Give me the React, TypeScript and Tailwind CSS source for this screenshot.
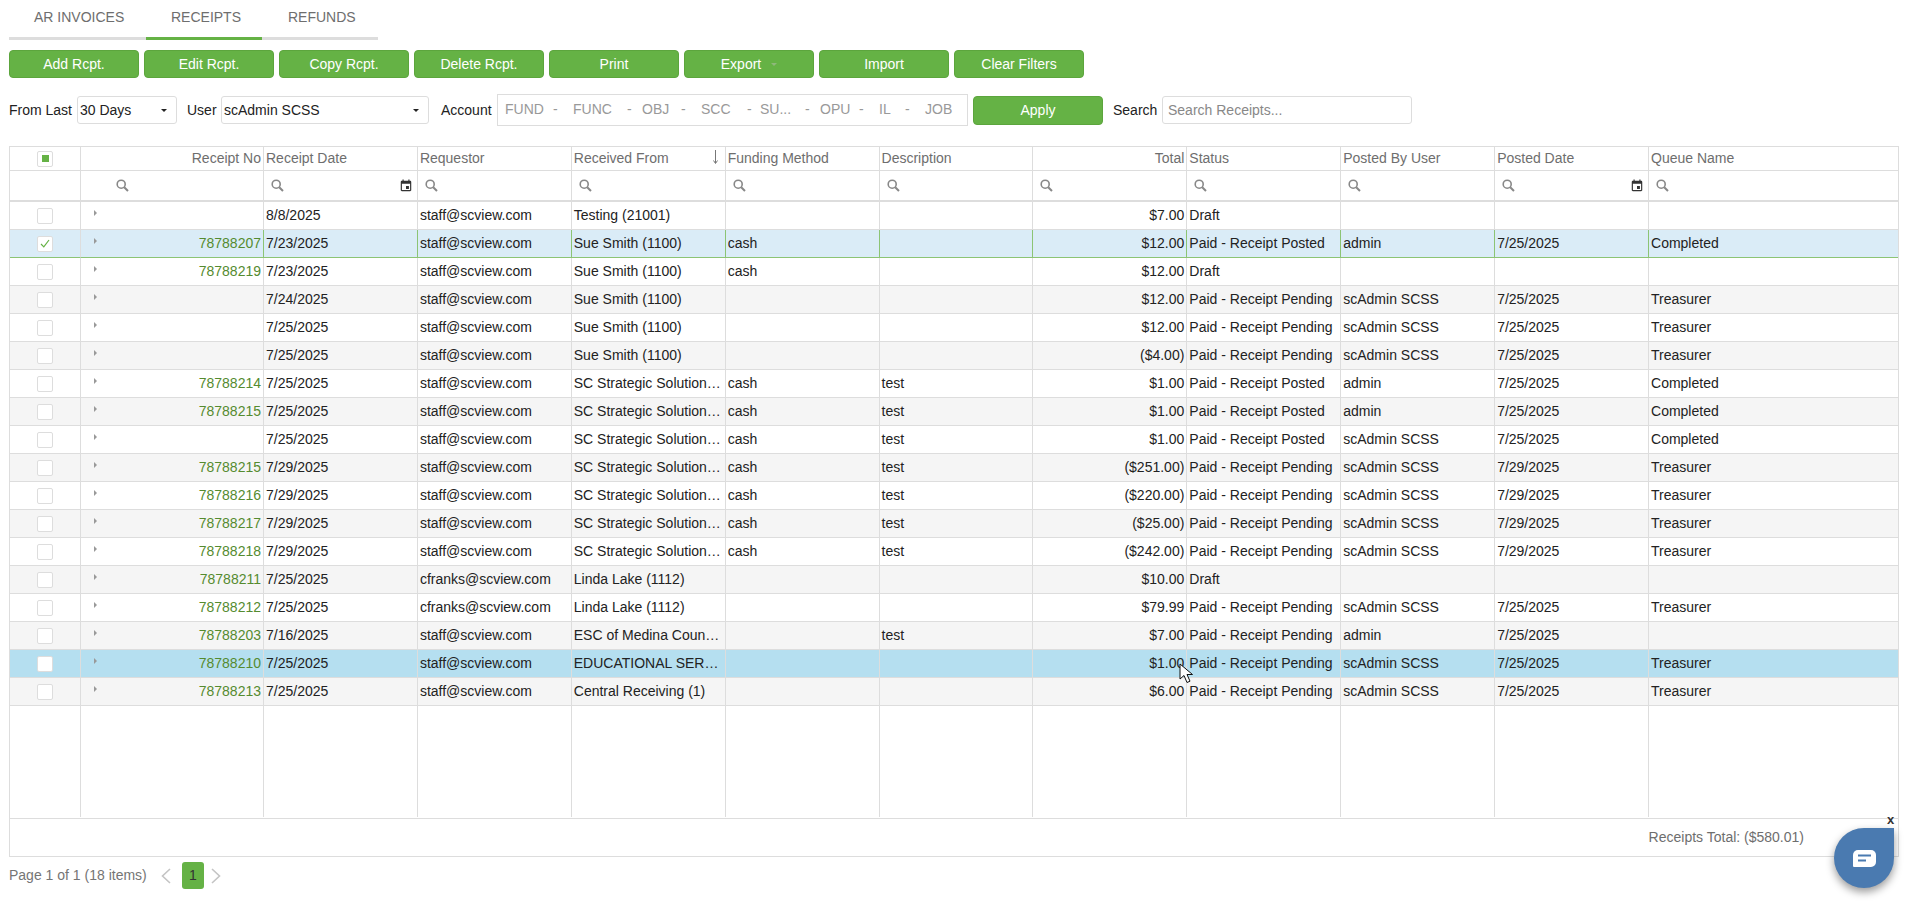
import type { ReactNode } from 'react';

const BTNS = ['Add Rcpt.', 'Edit Rcpt.', 'Copy Rcpt.', 'Delete Rcpt.', 'Print', 'Export', 'Import', 'Clear Filters'];

const S = 'staff@scview.com';
const C = 'cfranks@scview.com';
const SUE = 'Sue Smith (1100)';
const SC = 'SC Strategic Solution…';
const LL = 'Linda Lake (1112)';
const PEND = 'Paid - Receipt Pending';
const POSTED = 'Paid - Receipt Posted';
const SA = 'scAdmin SCSS';

// no, date, requestor, from, method, description, total, status, user, posted, queue
const ROWS: string[][] = [
  ['', '8/8/2025', S, 'Testing (21001)', '', '', '$7.00', 'Draft', '', '', ''],
  ['78788207', '7/23/2025', S, SUE, 'cash', '', '$12.00', POSTED, 'admin', '7/25/2025', 'Completed'],
  ['78788219', '7/23/2025', S, SUE, 'cash', '', '$12.00', 'Draft', '', '', ''],
  ['', '7/24/2025', S, SUE, '', '', '$12.00', PEND, SA, '7/25/2025', 'Treasurer'],
  ['', '7/25/2025', S, SUE, '', '', '$12.00', PEND, SA, '7/25/2025', 'Treasurer'],
  ['', '7/25/2025', S, SUE, '', '', '($4.00)', PEND, SA, '7/25/2025', 'Treasurer'],
  ['78788214', '7/25/2025', S, SC, 'cash', 'test', '$1.00', POSTED, 'admin', '7/25/2025', 'Completed'],
  ['78788215', '7/25/2025', S, SC, 'cash', 'test', '$1.00', POSTED, 'admin', '7/25/2025', 'Completed'],
  ['', '7/25/2025', S, SC, 'cash', 'test', '$1.00', POSTED, SA, '7/25/2025', 'Completed'],
  ['78788215', '7/29/2025', S, SC, 'cash', 'test', '($251.00)', PEND, SA, '7/29/2025', 'Treasurer'],
  ['78788216', '7/29/2025', S, SC, 'cash', 'test', '($220.00)', PEND, SA, '7/29/2025', 'Treasurer'],
  ['78788217', '7/29/2025', S, SC, 'cash', 'test', '($25.00)', PEND, SA, '7/29/2025', 'Treasurer'],
  ['78788218', '7/29/2025', S, SC, 'cash', 'test', '($242.00)', PEND, SA, '7/29/2025', 'Treasurer'],
  ['78788211', '7/25/2025', C, LL, '', '', '$10.00', 'Draft', '', '', ''],
  ['78788212', '7/25/2025', C, LL, '', '', '$79.99', PEND, SA, '7/25/2025', 'Treasurer'],
  ['78788203', '7/16/2025', S, 'ESC of Medina Coun…', '', 'test', '$7.00', PEND, 'admin', '7/25/2025', ''],
  ['78788210', '7/25/2025', S, 'EDUCATIONAL SER…', '', '', '$1.00', PEND, SA, '7/25/2025', 'Treasurer'],
  ['78788213', '7/25/2025', S, 'Central Receiving (1)', '', '', '$6.00', PEND, SA, '7/25/2025', 'Treasurer'],
];

const HEADERS = ['Receipt Date', 'Requestor', 'Received From', 'Funding Method', 'Description', 'Total', 'Status', 'Posted By User', 'Posted Date', 'Queue Name'];

function SearchIcon() {
  return (
    <svg width="13" height="13" viewBox="0 0 13 13" fill="none" stroke="#888" strokeWidth="1.6">
      <circle cx="5.2" cy="5.2" r="4" />
      <path d="M8.2 8.2 12 12" strokeWidth="2" />
    </svg>
  );
}

function CalendarIcon() {
  return (
    <svg width="14" height="14" viewBox="0 0 24 24" fill="#333">
      <path d="M17 12h-5v5h5v-5zM16 1v2H8V1H6v2H5c-1.11 0-1.99.9-1.99 2L3 19c0 1.1.89 2 2 2h14c1.1 0 2-.9 2-2V5c0-1.1-.9-2-2-2h-1V1h-2zm3 18H5V8h14v11z" />
    </svg>
  );
}

function Box({ children }: { children?: ReactNode }) {
  return (
    <span className="mx-auto flex h-[16px] w-[16px] items-center justify-center rounded-[2px] border border-[#ddd] bg-white">
      {children}
    </span>
  );
}

function Caret() {
  return <span className="h-0 w-0 border-x-[3px] border-t-[3px] border-x-transparent border-t-[#222]" />;
}

function Select({ value, className }: { value: string; className: string }) {
  return (
    <div className={'flex h-[28px] items-center justify-between rounded-[3px] border border-[#ddd] bg-white pl-[2px] pr-[9px] ' + className}>
      <span>{value}</span>
      <Caret />
    </div>
  );
}

export default function App() {
  return (
    <div className="relative h-[906px] w-[1910px] overflow-hidden bg-white text-[14px] text-[#222] [font-family:'Liberation_Sans',Arial,sans-serif]">
      <div className="px-[9px]">
        {/* tabs */}
        <div className="flex h-[40px] w-[369px] text-[#6e6e6e]">
          <div className="w-[137px] border-b-[3px] border-[#ddd] pl-[25px] pt-[7px]">AR INVOICES</div>
          <div className="w-[116px] border-b-[3px] border-[#65b245] pl-[25px] pt-[7px]">RECEIPTS</div>
          <div className="w-[116px] border-b-[3px] border-[#ddd] pl-[26px] pt-[7px]">REFUNDS</div>
        </div>

        {/* toolbar */}
        <div className="mt-[10px] flex gap-[5px]">
          {BTNS.map((b) => (
            <button key={b} className="flex h-[28px] w-[130px] items-center justify-center gap-[10px] rounded-[4px] border border-[#5ca53d] bg-[#65b245] text-white">
              {b}
              {b === 'Export' && <span className="h-0 w-0 border-x-[3px] border-t-[3px] border-x-transparent border-t-[#8fb87c]" />}
            </button>
          ))}
        </div>

        {/* filters */}
        <div className="mt-[16px] flex h-[32px] items-center">
          <span className="w-[68px]">From Last</span>
          <Select value="30 Days" className="w-[100px]" />
          <span className="ml-[10px] w-[34px]">User</span>
          <Select value="scAdmin SCSS" className="w-[208px]" />
          <span className="ml-[12px] w-[56px]">Account</span>
          <div className="flex h-[32px] w-[471px] items-center border border-[#ddd] pb-[2px] pl-[7px] text-[#999]">
            <span className="w-[48px]">FUND</span><span className="w-[20px]">-</span>
            <span className="w-[54px]">FUNC</span><span className="w-[15px]">-</span>
            <span className="w-[39px]">OBJ</span><span className="w-[20px]">-</span>
            <span className="w-[46px]">SCC</span><span className="w-[13px]">-</span>
            <span className="w-[45px]">SU...</span><span className="w-[15px]">-</span>
            <span className="w-[39px]">OPU</span><span className="w-[20px]">-</span>
            <span className="w-[26px]">IL</span><span className="w-[20px]">-</span>
            <span>JOB</span>
          </div>
          <button className="ml-[5px] flex h-[29px] w-[130px] items-center justify-center rounded-[4px] border border-[#5ca53d] bg-[#65b245] text-white">Apply</button>
          <span className="ml-[10px] w-[49px]">Search</span>
          <div className="flex h-[28px] w-[250px] items-center rounded-[3px] border border-[#ddd] pl-[5px] text-[#888]">Search Receipts...</div>
        </div>

        {/* grid */}
        <div className="mt-[20px] h-[711px] w-[1890px] border border-[#ddd]">
          <table className="w-[1888px] table-fixed border-separate border-spacing-0">
            <colgroup>
              <col className="w-[71px]" />
              <col className="w-[183px]" />
              <col className="w-[153.9px]" />
              <col className="w-[153.9px]" />
              <col className="w-[153.9px]" />
              <col className="w-[153.9px]" />
              <col className="w-[153.9px]" />
              <col className="w-[153.9px]" />
              <col className="w-[153.9px]" />
              <col className="w-[153.9px]" />
              <col className="w-[153.9px]" />
              <col />
            </colgroup>
            <thead>
              <tr className="h-[24px] text-[#6e6e6e]">
                <th className="border-b border-r border-[#ddd] p-0 font-normal">
                  <Box><span className="h-[7px] w-[7px] bg-[#65b245]" /></Box>
                </th>
                <th className="border-b border-r border-[#ddd] py-0 pl-0 pr-[2px] text-right font-normal">Receipt No</th>
                {HEADERS.map((h, i) => (
                  <th key={h} className={'relative border-b border-[#ddd] py-0 font-normal ' + (i === 9 ? '' : 'border-r ') + (i === 5 ? ' pl-0 pr-[2px] text-right' : ' pl-[2px] pr-0 text-left')}>
                    {h}
                    {h === 'Received From' && (
                      <svg className="absolute right-[6px] top-[3px]" width="7" height="14" viewBox="0 0 7 14" fill="none" stroke="#777" strokeWidth="1">
                        <path d="M3.5 0v13M1.5 10.5l2 3 2-3" />
                      </svg>
                    )}
                  </th>
                ))}
              </tr>
              <tr className="h-[31px]">
                <td className="border-b-2 border-r border-[#ddd] p-0" />
                <td className="border-b-2 border-r border-[#ddd] py-0 pl-[35px] pr-0">
                  <SearchIcon />
                </td>
                {HEADERS.map((h, i) => (
                  <td key={h} className={'border-b-2 border-[#ddd] py-0 pl-[7px] pr-[4px] ' + (i === 9 ? '' : 'border-r')}>
                    <div className="flex items-center justify-between">
                      <SearchIcon />
                      {(h === 'Receipt Date' || h === 'Posted Date') && <CalendarIcon />}
                    </div>
                  </td>
                ))}
              </tr>
            </thead>
            <tbody>
              {ROWS.map((r, idx) => {
                const selected = idx === 1;
                const hovered = idx === 16;
                const bg = selected ? 'bg-[#daecf7]' : hovered ? 'bg-[#b5dff0]' : idx >= 3 && idx % 2 === 1 ? 'bg-[#f5f5f5]' : 'bg-white';
                const bottom = selected ? 'border-b-[#8cc474]' : 'border-b-[#ddd]';
                const right = selected ? 'border-r-[#8cc474]' : 'border-r-[#ddd]';
                return (
                  <tr key={idx} className={'h-[28px] ' + bg}>
                    <td className={'border-b border-r border-r-[#ddd] p-0 ' + bottom}>
                      <Box>
                        {selected && (
                          <svg width="10" height="9" viewBox="0 0 10 9" fill="none" stroke="#65b245" strokeWidth="1.2">
                            <path d="M1 5l2.8 2.8L9 1" />
                          </svg>
                        )}
                      </Box>
                    </td>
                    <td className={'border-b border-r py-0 pl-[13px] pr-[2px] ' + bottom + ' ' + right}>
                      <div className="flex items-center justify-between">
                        <span className="h-0 w-0 -translate-y-[3px] border-y-[3px] border-l-[3px] border-y-transparent border-l-[#999]" />
                        <span className="text-[#558b2f]">{r[0]}</span>
                      </div>
                    </td>
                    {r.slice(1).map((v, i) => (
                      <td key={i} className={'whitespace-nowrap border-b py-0 ' + bottom + ' ' + (i === 9 ? '' : 'border-r ' + right) + (i === 5 ? ' pl-0 pr-[2px] text-right' : ' pl-[2px] pr-0')}>
                        {v}
                      </td>
                    ))}
                  </tr>
                );
              })}
              <tr className="h-[111px]">
                <td className="border-r border-[#ddd]" />
                <td className="border-r border-[#ddd]" />
                {HEADERS.map((h, i) => (
                  <td key={h} className={i === 9 ? '' : 'border-r border-[#ddd]'} />
                ))}
              </tr>
            </tbody>
          </table>
          <div className="mt-[1px] flex h-[38px] items-center justify-end border-t border-[#ddd] pr-[94px] text-[#6e6e6e]">
            Receipts Total: ($580.01)
          </div>
        </div>

        {/* pager */}
        <div className="mt-[5px] flex h-[27px] items-center text-[#757575]">
          <span className="w-[152px]">Page 1 of 1 (18 items)</span>
          <svg width="10" height="16" viewBox="0 0 10 16" fill="none" stroke="#c4c4c4" strokeWidth="1.6">
            <path d="M9 1 1.5 8 9 15" />
          </svg>
          <span className="ml-[11px] flex h-[27px] w-[22px] items-center justify-center rounded-[3px] bg-[#65b245] text-[#333]">1</span>
          <svg className="ml-[7px]" width="10" height="16" viewBox="0 0 10 16" fill="none" stroke="#c4c4c4" strokeWidth="1.6">
            <path d="M1 1l7.5 7L1 15" />
          </svg>
        </div>
      </div>

      {/* chat launcher */}
      <span className="absolute left-[1887px] top-[813px] text-[13px] font-bold leading-[14px] text-[#333]">x</span>
      <div className="absolute left-[1834px] top-[828px] flex h-[60px] w-[60px] items-center justify-center rounded-full rounded-tr-[8px] bg-[#4a7ab0] shadow-[0_4px_8px_rgba(0,0,0,0.4)]">
        <svg width="23" height="17" viewBox="0 0 23 17">
          <path d="M5 0h13a5 5 0 0 1 5 5v7a5 5 0 0 1-5 5H1a1 1 0 0 1-1-1V5a5 5 0 0 1 5-5z" fill="#fff" />
          <path d="M5 5.5h13M5 10.5h8" stroke="#4a7ab0" strokeWidth="2" />
        </svg>
      </div>

      {/* mouse pointer */}
      <svg className="absolute left-[1179px] top-[663px]" width="16" height="22" viewBox="0 0 16 22">
        <path d="M1 1v15l4-3.5 3 7 3-1.3-3-6.7h5.5z" fill="#fff" stroke="#111" strokeWidth="1" />
      </svg>
    </div>
  );
}
